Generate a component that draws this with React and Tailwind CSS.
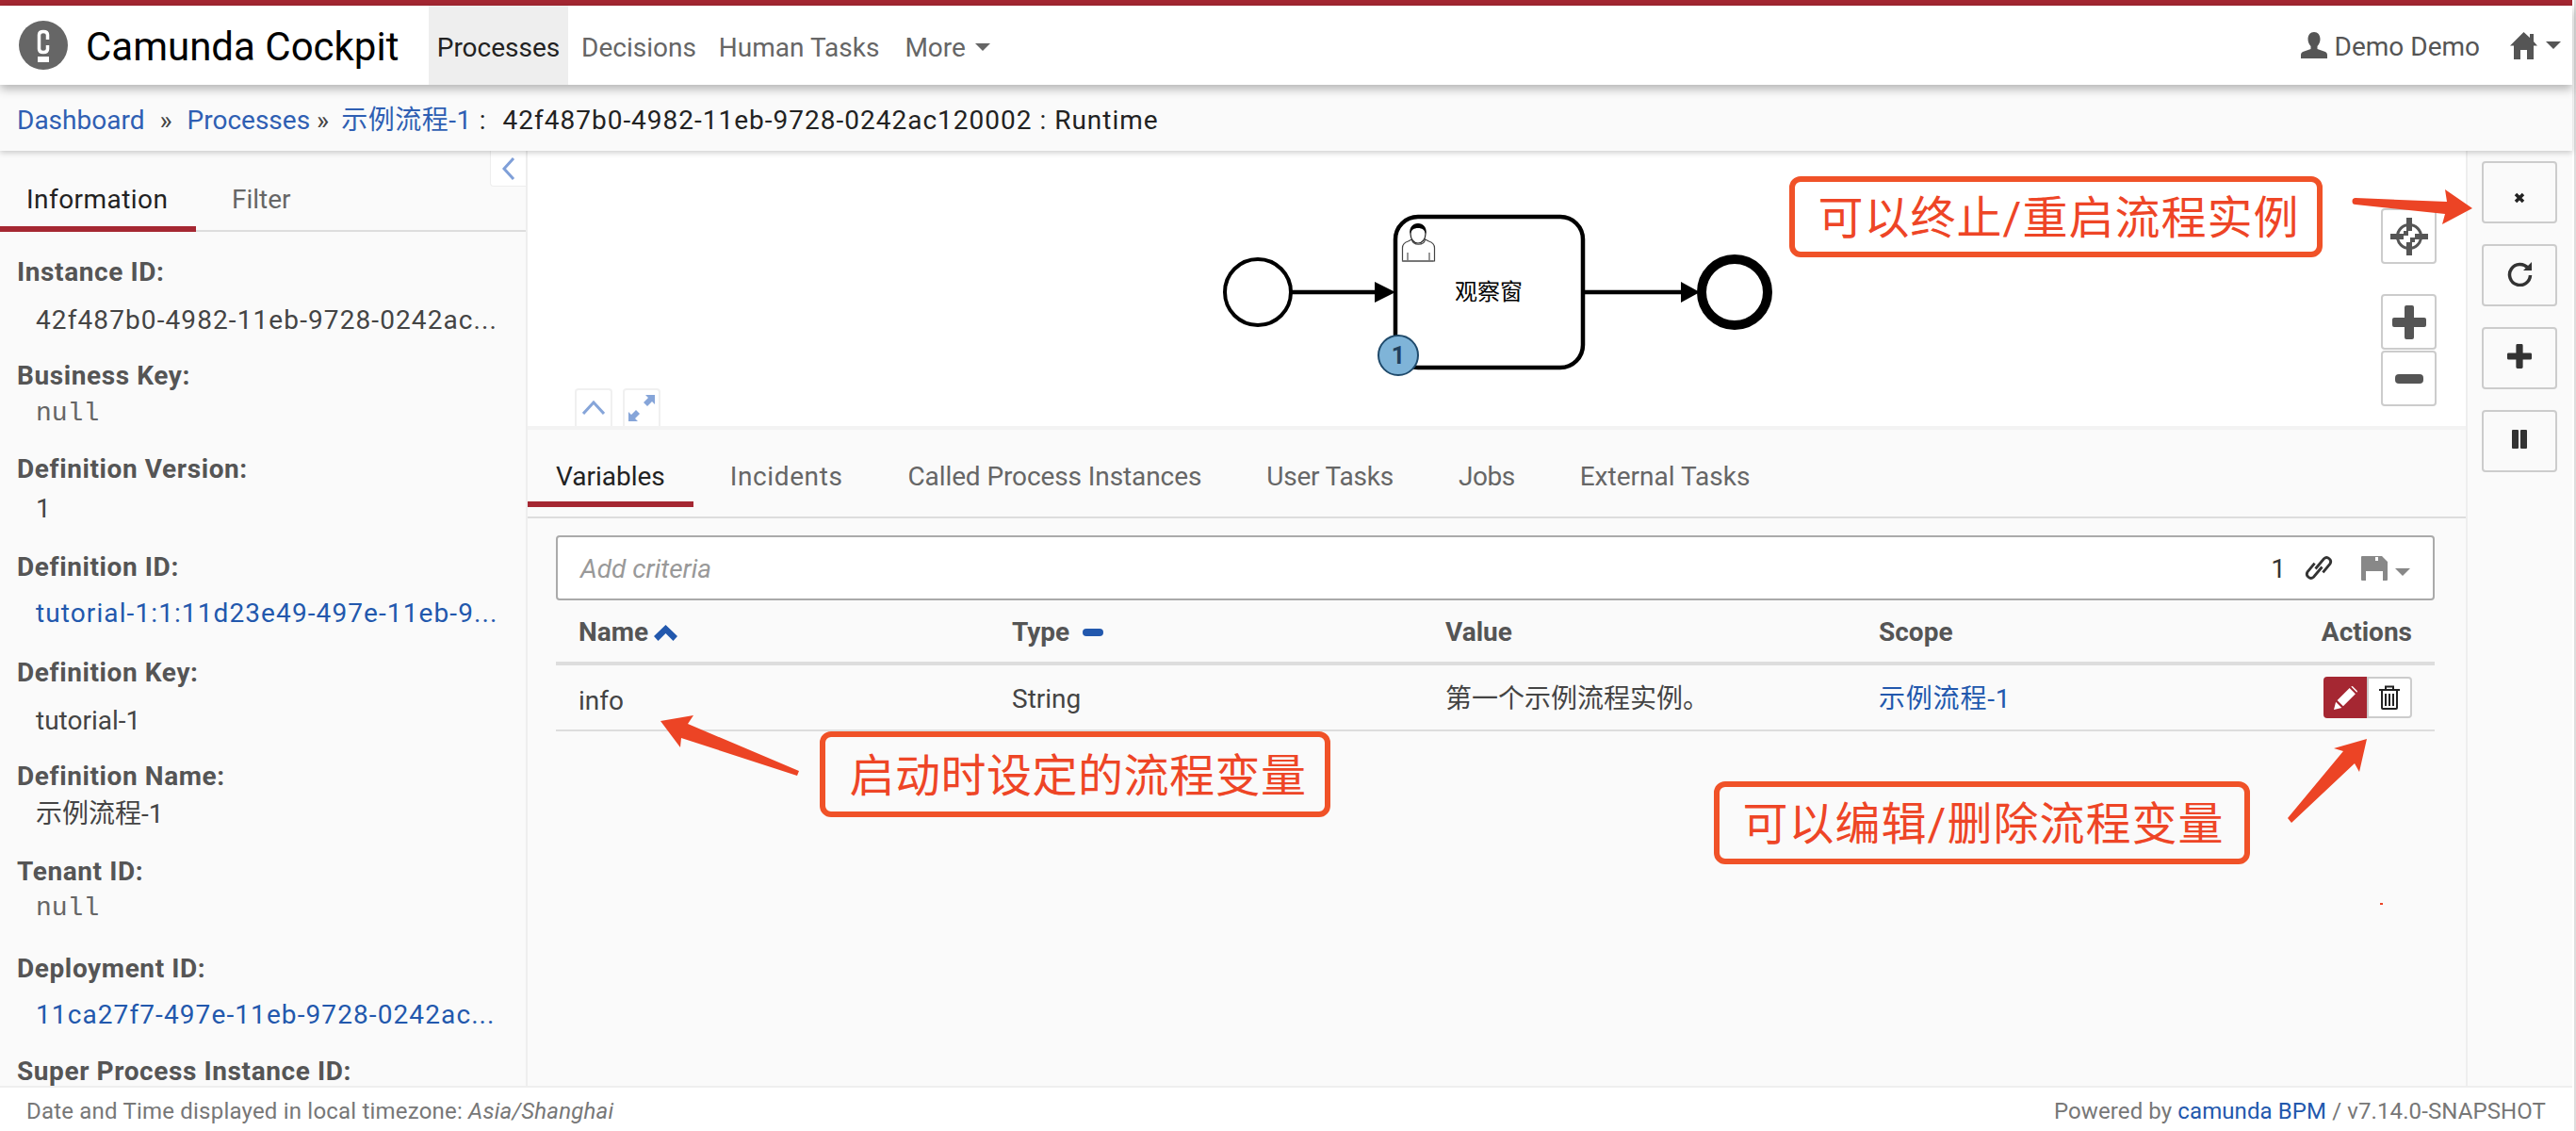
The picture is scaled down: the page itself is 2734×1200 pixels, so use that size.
const LINK = 'text-[#2258ad]'

// ===== Sidebar data =====
const INFO = [
  { label: 'Instance ID:', value: '42f487b0-4982-11eb-9728-0242ac...', id: true, h: 'h-[110px]', mt: 'mt-[11px]' },
  { label: 'Business Key:', value: 'null', mono: true, h: 'h-[99px]', mt: 'mt-0' },
  { label: 'Definition Version:', value: '1', h: 'h-[104px]', mt: 'mt-[2px]' },
  { label: 'Definition ID:', value: 'tutorial-1:1:11d23e49-497e-11eb-9...', id: true, link: true, h: 'h-[112px]', mt: 'mt-[9px]' },
  { label: 'Definition Key:', value: 'tutorial-1', h: 'h-[110px]', mt: 'mt-[11px]' },
  { label: 'Definition Name:', value: '示例流程-1', h: 'h-[101px]', mt: 'mt-0' },
  { label: 'Tenant ID:', value: 'null', mono: true, h: 'h-[103px]', mt: '-mt-px' },
  { label: 'Deployment ID:', value: '11ca27f7-497e-11eb-9728-0242ac...', id: true, link: true, h: 'h-[109px]', mt: 'mt-[9px]' },
  { label: 'Super Process Instance ID:', value: '', h: 'h-[60px]', mt: 'mt-0' },
]

const DETAIL_TABS = [
  { name: 'Variables', track: '' },
  { name: 'Incidents', track: 'tracking-[0.6px]' },
  { name: 'Called Process Instances', track: 'tracking-[-0.1px]' },
  { name: 'User Tasks', track: 'tracking-[-0.2px]' },
  { name: 'Jobs', track: 'tracking-[-0.5px]' },
  { name: 'External Tasks', track: '' },
]

// ===== Small drawings =====
function Caret({ className }) {
  return (
    <svg viewBox="0 0 16 8" className={className}>
      <polygon points="0,0 16,0 8,8" fill="currentColor" />
    </svg>
  )
}

function UserIcon() {
  return (
    <svg viewBox="0 0 28 28" className="w-7 h-7 text-[#555]">
      <path fill="currentColor" d="M14 0c-4 0-6.500 3-6.500 7.500 0 3 1.300 6 3 7.500v3L2 21c-1.500.7-2 2-2 3.500V28h28v-3.500c0-1.500-.5-2.800-2-3.500l-8.500-3v-3c1.700-1.500 3-4.500 3-7.500C20.500 3 18 0 14 0z" />
    </svg>
  )
}

function HomeIcon() {
  return (
    <svg viewBox="0 0 29 29" className="w-[29px] h-[29px] text-[#555]">
      <path fill="currentColor" d="M14.500 0 21 6V2h4v8l4 4.500h-4V29h-7V19h-7v10H4V14.500H0z" />
    </svg>
  )
}

function Logo() {
  return (
    <svg viewBox="0 0 52 52" className="w-[52px] h-[52px] shrink-0">
      <circle cx="26" cy="26" r="26" fill="#666" />
      <path fill="none" stroke="#fff" strokeWidth="3.500" d="M30.500 20v-5c0-2-1.500-3.500-4.500-3.500s-4.500 1.500-4.500 3.500v15c0 2 1.500 3.500 4.500 3.500s4.500-1.500 4.500-3.500v-4" />
      <rect x="20" y="38" width="12" height="6" fill="#fff" />
    </svg>
  )
}

function Pencil() {
  return (
    <svg viewBox="0 0 24 24" className="w-[25px] h-[25px] text-white">
      <path fill="currentColor" d="M0 24l2-8 6 6zM3.500 14.500 16 2l6 6L9.500 20.500zM17.500.5 19 0l5 5-.5 1.500z" />
    </svg>
  )
}

function Trash() {
  return (
    <svg viewBox="0 0 22 26" className="w-[22px] h-[26px] text-[#222]" fill="none" stroke="currentColor" strokeWidth="2">
      <path d="M0 5h22M7 5V1.500h8V5M3 5v19a1 1 0 0 0 1 1h14a1 1 0 0 0 1-1V5M7 9v13M11 9v13M15 9v13" />
    </svg>
  )
}

function Floppy() {
  return (
    <svg viewBox="0 0 28 26" className="w-7 h-[26px] text-[#888]">
      <path fill="currentColor" fillRule="evenodd" d="M0 1a1 1 0 0 1 1-1h21l6 6v19a1 1 0 0 1-1 1h-4V16H5v10H1a1 1 0 0 1-1-1zM15 1v4h3V1z" />
    </svg>
  )
}

function ChainLink() {
  return (
    <svg viewBox="0 0 26 29" className="w-[26px] h-[29px] overflow-visible text-[#333]" fill="none" stroke="currentColor" strokeWidth="2.800">
      <path d="M9.500 15.500 18.500 4.750A4.300 4.300 0 0 1 25 10.200L17.400 19.400" />
      <path d="M16.500 13.500 7.500 24.250A4.300 4.300 0 0 1 1 18.800L8.600 9.600" />
    </svg>
  )
}

function Crosshair() {
  return (
    <svg viewBox="0 0 40 40" className="w-10 h-10 text-[#555]">
      <circle cx="20" cy="20" r="12.500" fill="none" stroke="currentColor" strokeWidth="3" />
      <path fill="currentColor" d="M17 0h6v14h-6zM17 26h6v14h-6zM0 17h14v6H0zM26 17h14v6H26zM14 14h5v5h-5zM21 21h5v5h-5z" />
    </svg>
  )
}

function PlusIcon({ className }) {
  return (
    <svg viewBox="0 0 36 36" className={className}>
      <path fill="currentColor" d="M13 2a2 2 0 0 1 2-2h6a2 2 0 0 1 2 2v11h11a2 2 0 0 1 2 2v6a2 2 0 0 1-2 2H23v11a2 2 0 0 1-2 2h-6a2 2 0 0 1-2-2V23H2a2 2 0 0 1-2-2v-6a2 2 0 0 1 2-2h11z" />
    </svg>
  )
}

function SideButton({ children, className = '' }) {
  return (
    <div className={`w-20 h-[66px] border-2 border-[#ccc] rounded bg-[#fafafa] flex justify-center text-[#333] ${className}`}>
      {children}
    </div>
  )
}

function ZoomButton({ children, className = '' }) {
  return (
    <div className={`w-[59px] h-[59px] border-2 border-[#ccc] rounded bg-white flex items-center justify-center ${className}`}>
      {children}
    </div>
  )
}

// BPMN diagram, coordinates are the ones of the canvas
function Diagram() {
  return (
    <svg viewBox="0 0 2057 292" className="absolute left-0 top-0 w-[2057px] h-[292px]">
      <circle cx="775" cy="150" r="35" fill="#fff" stroke="#000" strokeWidth="4" />
      <path d="M811 150h92" stroke="#000" strokeWidth="4.500" />
      <polygon points="899,139 921,150 899,161" fill="#000" />
      <rect x="921" y="70" width="199" height="160" rx="24" fill="#fff" stroke="#000" strokeWidth="4.500" />
      <path d="M1120 150h106" stroke="#000" strokeWidth="4.500" />
      <polygon points="1224,139 1244,150 1224,161" fill="#000" />
      <circle cx="1281" cy="150" r="35" fill="#fff" stroke="#000" strokeWidth="10" />
      <text x="1020" y="158" textAnchor="middle" fontSize="24" fontFamily="'Noto Sans CJK SC', sans-serif" fill="#000">观察窗</text>
      {/* user task marker */}
      <path d="M928.500 117v-14c0-4 3-6 6-7l4-2c1 7 13 7 14 0l4 2c3 1 6 3 6 7v14z" fill="#fff" stroke="#444" strokeWidth="1.200" />
      <path d="M928.500 117h33" stroke="#777" strokeWidth="2" />
      <path d="M934 117v-9M957 117v-9" stroke="#777" strokeWidth="1.500" />
      <ellipse cx="945" cy="88" rx="8" ry="10" fill="#fff" stroke="#222" strokeWidth="1.200" />
      <path d="M936.500 88c-1-7 3-11 8.500-11s9.500 4 8.500 11c-1.500-4-4-6-8.500-6s-7 2-8.500 6z" fill="#000" />
      {/* token badge */}
      <circle cx="924" cy="217" r="21" fill="#7fb4d8" stroke="#1f4a6b" strokeWidth="2" />
      <text x="924" y="226" textAnchor="middle" fontSize="25" fontWeight="700" fontFamily="Roboto, sans-serif" fill="#1f3f5c">1</text>
    </svg>
  )
}

function Callout({ className, children }) {
  return (
    <div className={`absolute z-30 border-[6px] border-[#f05228] rounded-xl flex items-center justify-center pt-1 text-[48px] leading-none text-[#ee4526] whitespace-nowrap ${className}`}>
      {children}
    </div>
  )
}

export default function App() {
  return (
    <div className="relative w-[2734px] h-[1200px] overflow-hidden bg-white flex font-['Roboto','Noto_Sans_CJK_SC',sans-serif] text-[28px] text-[#444]">
      <div className="w-[2730px] h-full flex flex-col">
        <div className="h-1.5 bg-[#a52732] shrink-0" />

        {/* Navbar */}
        <header className="relative z-20 h-[84px] shrink-0 bg-white flex items-stretch shadow-[0_4px_10px_rgba(0,0,0,0.3)]">
          <div className="flex items-center pl-5 w-[455px] shrink-0">
            <Logo />
            <span className="ml-[19px] pt-[3px] text-[42px] text-black whitespace-nowrap">Camunda Cockpit</span>
          </div>
          <nav className="flex items-stretch text-[#666] gap-1">
            <div className="w-[148px] pt-[6px] bg-[#eee] text-[#222] flex items-center justify-center">Processes</div>
            <div className="px-2.5 pt-[6px] flex items-center">Decisions</div>
            <div className="px-2.5 pt-[6px] flex items-center">Human Tasks</div>
            <div className="px-2.5 ml-[3px] flex items-center gap-[10px]">
              <span className="pt-[6px]">More</span>
              <Caret className="w-4 h-2 mt-1 text-[#666]" />
            </div>
          </nav>
          <div className="ml-auto flex items-center pr-3 text-[#555]">
            <UserIcon />
            <span className="ml-2 pt-[3px]">Demo Demo</span>
            <div className="ml-8">
              <HomeIcon />
            </div>
            <Caret className="w-4 h-2 ml-[9px] text-[#555]" />
          </div>
        </header>

        {/* Breadcrumb */}
        <div className="relative z-10 h-[70px] shrink-0 bg-[#fafafa] flex items-center px-[18px] pt-[6px] whitespace-nowrap text-[#222] shadow-[0_2px_6px_rgba(0,0,0,0.2)]">
          <span className="text-[#2f5fb3]">Dashboard</span>
          <span className="mx-4 text-[#444]">»</span>
          <span className="text-[#2f5fb3]">Processes</span>
          <span className="ml-[7px] mr-[13px] text-[#444]">»</span>
          <span className="text-[#2f5fb3] tracking-[0.5px]">示例流程-1</span>
          <span className="ml-2 mr-[18px]">:</span>
          <span className="tracking-[1px]">42f487b0-4982-11eb-9728-0242ac120002 : Runtime</span>
        </div>

        <main className="flex-1 flex min-h-0">
          {/* Sidebar */}
          <aside className="relative w-[560px] shrink-0 bg-[#fafafa] border-r-2 border-[#eee] overflow-hidden">
            <div className="absolute right-0 top-0 w-[38px] h-[38px] bg-white rounded-bl border border-t-0 border-r-0 border-[#eee] flex items-center justify-center">
              <svg viewBox="0 0 14 24" className="w-3.5 h-6 text-[#7f9fd8]" fill="none" stroke="currentColor" strokeWidth="3">
                <path d="M12 1 2 12l10 11" />
              </svg>
            </div>
            <div className="flex h-[86px] border-b-2 border-[#ddd]">
              <div className="w-[208px] h-[86px] pt-[34px] pl-[28px] pb-[10px] leading-9 tracking-[0.45px] border-b-[6px] border-[#a52732] text-[#222]">Information</div>
              <div className="ml-[8px] pt-[34px] px-[30px] leading-9 text-[#666]">Filter</div>
            </div>
            <dl className="pt-[23px] pl-[18px]">
              {INFO.map((item) => (
                <div key={item.label} className={item.h}>
                  <dt className="h-10 leading-10 font-bold tracking-[0.6px] text-[#555] whitespace-nowrap">{item.label}</dt>
                  {item.value && (
                    <dd className={`h-10 leading-10 pl-5 whitespace-nowrap ${item.mt} ${item.link ? LINK : ''} ${item.id ? 'tracking-[1.1px]' : ''} ${item.mono ? "font-['Liberation_Mono',monospace] text-[#666]" : ''}`}>
                      {item.value}
                    </dd>
                  )}
                </div>
              ))}
            </dl>
          </aside>

          {/* Center */}
          <section className="flex-1 min-w-0 flex flex-col bg-[#fafafa]">
            <div className="relative h-[296px] shrink-0 bg-white border-b-4 border-[#f3f3f3]">
              <Diagram />
              <div className="absolute left-[50px] bottom-0 flex gap-[11px]">
                <div className="w-10 h-10 border-2 border-b-0 border-[#f0f0f0] rounded-t flex items-center justify-center">
                  <svg viewBox="0 0 24 16" className="w-6 h-4 text-[#86a5d9]" fill="none" stroke="currentColor" strokeWidth="3">
                    <path d="M1 14 12 2l11 12" />
                  </svg>
                </div>
                <div className="w-10 h-10 border-2 border-b-0 border-[#f0f0f0] rounded-t flex items-center justify-center">
                  <svg viewBox="0 0 28 28" className="w-7 h-7 text-[#86a5d9]">
                    <path fill="currentColor" d="M18 0h10v10l-3-3-5 5-4-4 5-5zM0 28V18l3 3 5-5 4 4-5 5 3 3z" />
                  </svg>
                </div>
              </div>
              <div className="absolute left-[1967px] top-[61px] flex flex-col">
                <ZoomButton className="mb-8"><Crosshair /></ZoomButton>
                <ZoomButton><PlusIcon className="w-9 h-9 text-[#555]" /></ZoomButton>
                <ZoomButton className="mt-px">
                  <div className="w-[30px] h-[10px] rounded-sm bg-[#555]" />
                </ZoomButton>
              </div>
            </div>

            {/* Detail tabs */}
            <div className="h-[94px] shrink-0 border-b-2 border-[#ddd]">
              <div className="flex gap-[9px] whitespace-nowrap">
                {DETAIL_TABS.map((tab, i) => (
                  <div
                    key={tab.name}
                    className={`pt-[32px] pb-[8px] px-[30px] leading-9 ${tab.track} ${i === 0 ? 'border-b-[6px] border-[#a52732] text-[#222]' : 'text-[#666]'}`}
                  >
                    {tab.name}
                  </div>
                ))}
              </div>
            </div>

            <div className="pl-[30px] pr-[33px] pt-[18px]">
              {/* Search */}
              <div className="h-[69px] border-2 border-[#aaa] rounded bg-white flex items-center pl-6 pr-6">
                <span className="italic pt-[3px] text-[#999]">Add criteria</span>
                <span className="ml-auto pt-[3px] text-[#333]">1</span>
                <div className="ml-[22px]"><ChainLink /></div>
                <div className="ml-[32px]"><Floppy /></div>
                <Caret className="w-4 h-2 ml-2 mt-2 text-[#888]" />
              </div>

              {/* Table */}
              <div className="grid grid-cols-[460px_460px_460px_460px_154px] h-[69px] pt-[3px] items-center border-b-4 border-[#ddd] font-bold text-[#555]">
                <div className="pl-6 flex items-center gap-[6px]">
                  Name
                  <svg viewBox="0 0 25 17" className="w-[25px] h-[17px] text-[#2258ad]">
                    <path fill="currentColor" d="M12.500 0 25 12l-4.500 5-8-8-8 8L0 12z" />
                  </svg>
                </div>
                <div className="pl-6 flex items-center gap-[14px]">
                  Type
                  <div className="w-[22px] h-2 rounded-sm bg-[#2258ad]" />
                </div>
                <div className="pl-6">Value</div>
                <div className="pl-6">Scope</div>
                <div className="pr-6 text-right">Actions</div>
              </div>
              <div className="grid grid-cols-[460px_460px_460px_460px_154px] h-[70px] items-center border-b-2 border-[#ddd]">
                <div className="pl-6 pt-2">info</div>
                <div className="pl-6 pt-[3px]">String</div>
                <div className="pl-6 pt-[3px]">第一个示例流程实例。</div>
                <div className={`pl-6 pt-[3px] tracking-[0.8px] ${LINK}`}>示例流程-1</div>
                <div className="pr-6 flex justify-end">
                  <div className="w-[46px] h-11 bg-[#a52732] rounded-l flex items-center justify-center">
                    <Pencil />
                  </div>
                  <div className="w-12 h-11 bg-white border-2 border-[#ccc] rounded-r flex items-center justify-center">
                    <Trash />
                  </div>
                </div>
              </div>
            </div>
          </section>

          {/* Action bar */}
          <div className="w-[113px] shrink-0 bg-[#fafafa] border-l-2 border-[#eee] pl-[15px] pt-[11px] flex flex-col gap-[22px]">
            <SideButton className="pt-[31px]">
              <svg viewBox="0 0 12 12" className="w-3 h-3">
                <path d="M2 2l8 8M10 2l-8 8" stroke="#222" strokeWidth="3.500" />
              </svg>
            </SideButton>
            <SideButton className="items-center pb-1">
              <svg viewBox="0 0 27 27" className="w-[27px] h-[27px] text-[#333]">
                <path d="M22 7.500A11 11 0 1 0 24.500 15" fill="none" stroke="currentColor" strokeWidth="3.500" />
                <polygon points="17,10 26,10 26,1" fill="currentColor" />
              </svg>
            </SideButton>
            <SideButton className="items-center pb-1">
              <PlusIcon className="w-[26px] h-[26px] text-[#333]" />
            </SideButton>
            <SideButton className="items-center pb-1 gap-0.5">
              <div className="w-[7px] h-5 rounded-[1px] bg-[#333]" />
              <div className="w-[7px] h-5 rounded-[1px] bg-[#333]" />
            </SideButton>
          </div>
        </main>

        {/* Footer */}
        <footer className="h-12 shrink-0 bg-white border-t-2 border-[#eee] flex items-center justify-between pl-[28px] pr-[28px] pt-[3px] text-[24px] text-[#777] whitespace-nowrap">
          <div className="tracking-[0.2px]">Date and Time displayed in local timezone: <em>Asia/Shanghai</em></div>
          <div className="tracking-[0.1px]">Powered by <span className={LINK}>camunda BPM</span> / v7.14.0-SNAPSHOT</div>
        </footer>
      </div>
      <div className="w-1 h-full bg-white border-r-2 border-[#ddd]" />

      {/* Annotations lying over the screenshot */}
      <Callout className="left-[1899px] top-[187px] w-[566px] h-[86px] pl-[6px] bg-white tracking-[1px]">可以终止/重启流程实例</Callout>
      <Callout className="left-[870px] top-[776px] w-[542px] h-[91px] pl-[6px] tracking-[0.5px]">启动时设定的流程变量</Callout>
      <Callout className="left-[1819px] top-[829px] w-[569px] h-[88px] pl-[3px] tracking-[1px]">可以编辑/删除流程变量</Callout>
      <svg viewBox="0 0 2734 1200" className="absolute left-0 top-0 z-40 w-[2734px] h-[1200px] pointer-events-none">
        <g fill="#ec4425">
          <path d="M2500 210 2597 214 2595 201 2624 221 2592 238 2595 227 2500 217a3 3 0 0 1 0-7z" />
          <path d="M701 765 736 759 730 768 848 818 846 823 723 783 722 793z" />
          <path d="M2512 784 2477 794 2487 797 2428 868 2432 873 2499 810 2504 819z" />
          <rect x="2526" y="958" width="3" height="2" />
        </g>
      </svg>
    </div>
  )
}
